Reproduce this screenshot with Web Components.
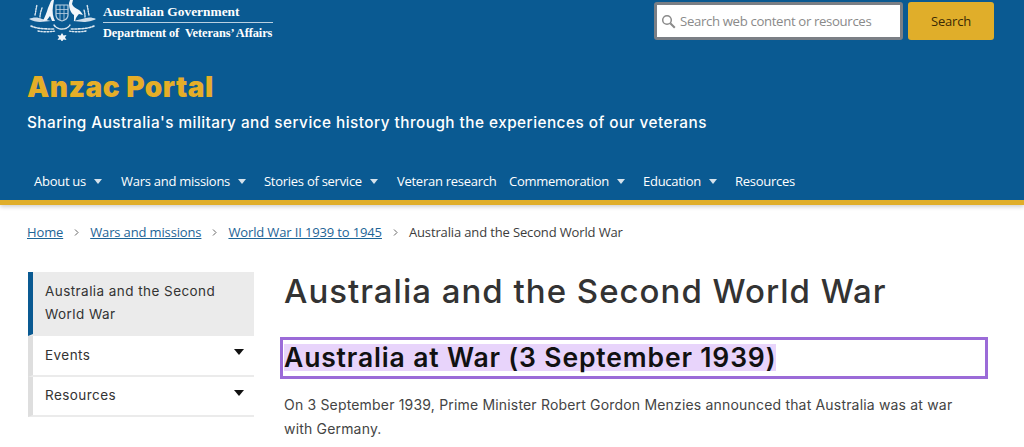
<!DOCTYPE html>
<html lang="en">
<head>
<meta charset="utf-8">
<title>Anzac Portal</title>
<style>
  html, body { margin: 0; padding: 0; background: #fff; overflow: hidden; height: 447px; }
</style>
</head>
<body>
<site-header></site-header>
<bread-crumbs></bread-crumbs>
<div style="display:flex;padding:0 36px 0 28px;gap:30px;align-items:flex-start">
  <side-nav></side-nav>
  <main-content></main-content>
</div>
<script>
class SiteHeader extends HTMLElement {
  connectedCallback() {
    this.attachShadow({ mode: 'open' });
    const caret = '<svg width="8" height="5" viewBox="0 0 8 5"><path d="M0 0h8L4 5z" fill="#d5e2ec"/></svg>';
    this.shadowRoot.innerHTML = `
      <style>
        :host { display: block; height: 200px; background: #0a5a92; border-bottom: 5px solid #e0ae2a; box-shadow: 0 2px 4px rgba(0,0,0,.18); color: #fff; font-family: "Open Sans", sans-serif; }
        .top { display: flex; justify-content: space-between; height: 44px; padding: 0 30px 0 28px; }
        .logo { display: flex; gap: 7px; height: 41px; }
        .names { font: bold 13.4px/17px "Liberation Serif", serif; width: 170px; padding-top: 3px; white-space: nowrap; }
        .names div:first-child { border-bottom: 1px solid #b9d0e1; padding-bottom: 2px; margin-bottom: 2px; width: 170px; }
        .names .dept { font-size: 12.4px; letter-spacing: -.1px; }
        form { display: flex; gap: 5px; padding-top: 2px; margin: 0; }
        .box { display: flex; align-items: center; gap: 4px; box-sizing: border-box; width: 249px; height: 38px; padding-left: 4px; background: #fff; border: 3px solid #7b7f85; border-radius: 3px; color: #8a8a8a; font-size: 13.2px; letter-spacing: -.35px; }
        .go { display: flex; align-items: center; justify-content: center; width: 86px; height: 38px; background: #e0ae2a; border-radius: 3px; color: #3b2a05; font-size: 13px; letter-spacing: -.2px; }
        h1 { margin: 26px 0 0 27px; font: 900 28px/34px Inter, sans-serif; letter-spacing: .5px; color: #e5ae28; }
        p { margin: 8px 0 0 27px; font: 500 15.3px/22px Inter, sans-serif; letter-spacing: .48px; }
        nav { display: flex; margin: 38px 0 0 34px; font-size: 13px; letter-spacing: -.27px; line-height: 18px; white-space: nowrap; }
        nav span { display: flex; align-items: center; gap: 8px; }
      </style>
      <div class="top">
        <div class="logo">
          <svg width="68" height="41" viewBox="0 0 68 41" fill="#f2f6fa">
            <path d="M15 21C17 16 19 12 20 8L23 1 24 0h2L25 6C24 12 25 17 27 21L24 21 22 16 19 20z"/>
            <path d="M42 0h3L44 4C45 7 48 8 51 10 53 12 54 13 55 15L51 14C50 15 49 16 48 18L47 21H46L46 15C43 13 41 9 41 3z"/>
            <path d="M28 5h12v10c0 3-2 5-6 6-4-1-6-3-6-6z" fill="none" stroke="#bcd2e2" stroke-width="1.200"/>
            <path d="M28 9.500h12M28 13.500h12M32 5v15M36 5v15" fill="none" stroke="#bcd2e2" stroke-width=".8"/>
            <path d="M1 19c4-2 9-2 13 0l9 2-11 1c-3 0-8-1-11-3zM68 19c-4-2-9-2-14 0l-9 2 11 1c3 0 9-1 12-3z" opacity=".85"/>
            <path d="M34 33l1.500 2.500 3-.5-1.500 2.500 1.500 2.500-3-.5-1.500 2-1.500-2-3 .5 1.500-2.500-1.500-2.500 3 .5z"/>
            <g fill="none" stroke="#dbe7f0" stroke-linecap="round">
              <path d="M3 26c7 3 15 3 23 3M66 26c-7 3-16 3-24 3" stroke-width="1.600" stroke-dasharray="2 1.500"/>
              <path d="M10 31c5 1 12 1 17 0M58 31c-5 1-12 1-17 0" stroke-width="1.400" stroke-dasharray="1.500 1.500"/>
              <path d="M7 15c1-4 1-7 2-10M12 17c0-3 1-6 2-9M61 15c-1-4-1-7-2-10M57 17c0-2 0-4-1-7" stroke-width="1.400" stroke-dasharray="1.500 1.200"/>
              <path d="M26 25c2 3 5 4 8 4s6-1 8-4" stroke-width="1.400" stroke-dasharray="2 1"/>
            </g>
          </svg>
          <div class="names">
            <div>Australian Government</div>
            <div class="dept">Department of&nbsp; Veterans’ Affairs</div>
          </div>
        </div>
        <form>
          <div class="box">
            <svg width="15" height="15" viewBox="0 0 15 15" fill="none" stroke="#8a8a8a"><circle cx="6" cy="6" r="4.300" stroke-width="1.500"/><path d="M9.300 9.300l4.500 4.500" stroke-width="2"/></svg>
            <span>Search web content or resources</span>
          </div>
          <div class="go">Search</div>
        </form>
      </div>
      <h1>Anzac Portal</h1>
      <p>Sharing Australia's military and service history through the experiences of our veterans</p>
      <nav>
        <span style="width:87px">About us ${caret}</span>
        <span style="width:143px">Wars and missions ${caret}</span>
        <span style="width:133px">Stories of service ${caret}</span>
        <span style="width:112px">Veteran research</span>
        <span style="width:134px">Commemoration ${caret}</span>
        <span style="width:92px">Education ${caret}</span>
        <span>Resources</span>
      </nav>
    `;
  }
}

class BreadCrumbs extends HTMLElement {
  connectedCallback() {
    this.attachShadow({ mode: 'open' });
    const sep = '<svg width="5" height="7" viewBox="0 0 5 7" fill="none" stroke="#666" stroke-width="1"><path d="M1 .5l3 3-3 3"/></svg>';
    this.shadowRoot.innerHTML = `
      <style>
        :host { display: flex; align-items: center; gap: 11px; height: 18px; padding: 18px 0 31px 27px; font: 13px/18px "Open Sans", sans-serif; letter-spacing: -.14px; color: #3c3c3c; white-space: nowrap; }
        a { color: #1d6496; text-decoration: underline; }
        a:first-child { margin-right: 1px; }
      </style>
      <a>Home</a>${sep}<a>Wars and missions</a>${sep}<a>World War II 1939 to 1945</a>${sep}<span>Australia and the Second World War</span>
    `;
  }
}

class SideNav extends HTMLElement {
  connectedCallback() {
    this.attachShadow({ mode: 'open' });
    const drop = '<svg width="10" height="6" viewBox="0 0 10 6"><path d="M0 0h10L5 6z" fill="#111"/></svg>';
    this.shadowRoot.innerHTML = `
      <style>
        :host { display: block; flex: none; width: 226px; font: 400 13.5px/23px Inter, sans-serif; letter-spacing: .44px; color: #333; }
        div { display: flex; justify-content: space-between; box-sizing: border-box; border-left: 5px solid #dedede; border-bottom: 2px solid #ebebeb; padding: 0 10px 1px 12px; height: 41px; align-items: center; }
        div:last-child { height: 40px; }
        svg { margin-top: -6px; }
        .on { display: block; height: 64px; background: #ebebeb; border-left-color: #0a5a92; padding-top: 8px; }
      </style>
      <div class="on">Australia and the Second World War</div>
      <div>Events ${drop}</div>
      <div>Resources ${drop}</div>
    `;
  }
}

class MainContent extends HTMLElement {
  connectedCallback() {
    this.attachShadow({ mode: 'open' });
    this.shadowRoot.innerHTML = `
      <style>
        :host { display: block; flex: 1; min-width: 0; margin-top: -1px; font-family: Inter, sans-serif; }
        h1 { margin: 0; font: 500 33px/40px Inter, sans-serif; letter-spacing: 1px; color: #333; }
        h2 { box-sizing: border-box; height: 42px; margin: 26px 0 0 -4px; padding: 4px 0 0 1px; border: 3px solid #9b6bd8; font: 600 26.5px/27px Inter, sans-serif; letter-spacing: .85px; color: #111; white-space: nowrap; }
        mark { display: inline-block; background: #e8d4fb; color: inherit; }
        p { margin: 14px 0 0; max-width: 680px; font: 400 14px/24px Inter, sans-serif; letter-spacing: .18px; color: #444; }
      </style>
      <h1>Australia and the Second World War</h1>
      <h2><mark>Australia at War (3 September 1939)</mark></h2>
      <p>On 3 September 1939, Prime Minister Robert Gordon Menzies announced that Australia was at war with Germany.</p>
    `;
  }
}

customElements.define('site-header', SiteHeader);
customElements.define('bread-crumbs', BreadCrumbs);
customElements.define('side-nav', SideNav);
customElements.define('main-content', MainContent);
</script>
</body>
</html>
